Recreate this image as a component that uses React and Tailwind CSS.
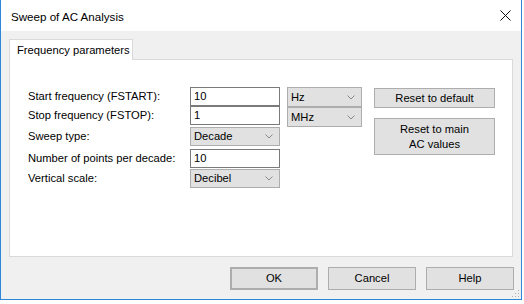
import React from "react";

function Chevron() {
  return (
    <svg width="8" height="5" viewBox="0 0 8 5">
      <path d="M0.5 0.5 L4 4 L7.5 0.5" fill="none" stroke="#8a8a8a" strokeWidth="1" />
    </svg>
  );
}

function Select({ label, className }) {
  return (
    <div
      className={
        "flex items-center justify-between bg-[#e1e1e1] border border-[#adadad] pl-[3px] pr-[6px] " +
        className
      }
    >
      <span>{label}</span>
      <Chevron />
    </div>
  );
}

function Input({ value }) {
  return (
    <div className="flex items-center h-[19px] w-[90px] border border-[#7a7a7a] bg-white pl-[3px]">
      {value}
    </div>
  );
}

function Row({ label, children, className }) {
  return (
    <div className={"flex items-center " + className}>
      <div className="w-[162px] whitespace-nowrap">{label}</div>
      {children}
    </div>
  );
}

function Btn({ children, className }) {
  return (
    <div
      className={
        "flex items-center justify-center text-center bg-[#e1e1e1] border border-[#adadad] leading-[15px] " +
        className
      }
    >
      {children}
    </div>
  );
}

export default function App() {
  return (
    <div className="w-[524px] h-[304px] bg-white text-[11.2px] text-black font-['Liberation_Sans','Noto_Sans',sans-serif] leading-[15px] whitespace-nowrap">
      <div className="relative w-[522px] h-[300px] flex flex-col border-l border-r border-b border-[#2d86d8]">
        {/* title bar */}
        <div className="h-[31px] bg-white flex items-center justify-between pl-[10px] pr-[10px]">
          <span className="text-[11.6px] pt-[1px]">Sweep of AC Analysis</span>
          <svg width="11" height="11" viewBox="0 0 11 11">
            <path d="M0.5 0.5 L10.5 10.5 M10.5 0.5 L0.5 10.5" stroke="#111" strokeWidth="1" fill="none" />
          </svg>
        </div>
        {/* body */}
        <div className="flex-1 bg-[#f0f0f0] pl-[8px] pt-[8px] flex flex-col">
          <div className="relative z-10 w-[124px] h-[21px] -mb-[1px] bg-white border-t border-l border-r border-[#d9d9d9] pl-[7px] flex items-center">
            Frequency parameters
          </div>
          <div className="w-[504px] h-[198px] bg-white border border-[#d9d9d9]">
            <div className="flex pt-[27px] pl-[18px]">
              <div className="flex flex-col w-[252px]">
                <Row label="Start frequency (FSTART):" className="h-[19px]">
                  <Input value="10" />
                </Row>
                <Row label="Stop frequency (FSTOP):" className="h-[19px]">
                  <Input value="1" />
                </Row>
                <Row label="Sweep type:" className="h-[19px] mt-[2px]">
                  <Select label="Decade" className="w-[90px] h-[19px]" />
                </Row>
                <Row label="Number of points per decade:" className="h-[19px] mt-[3px]">
                  <Input value="10" />
                </Row>
                <Row label="Vertical scale:" className="h-[19px] mt-[1px]">
                  <Select label="Decibel" className="w-[90px] h-[19px]" />
                </Row>
              </div>
              <div className="ml-[7px] flex flex-col w-[75px]">
                <Select label="Hz" className="h-[20px]" />
                <Select label="MHz" className="h-[20px]" />
              </div>
              <div className="ml-[12px] mt-[1px] flex flex-col w-[121px] gap-[10px]">
                <Btn className="h-[20px]">Reset to default</Btn>
                <Btn className="h-[37px]">
                  Reset to main
                  <br />
                  AC values
                </Btn>
              </div>
            </div>
          </div>
          <div className="flex justify-end gap-[10px] mt-[10px] pr-[7px]">
            <Btn className="w-[88px] h-[23px] border-2 border-[#0078d7]">OK</Btn>
            <Btn className="w-[88px] h-[23px]">Cancel</Btn>
            <Btn className="w-[88px] h-[23px]">Help</Btn>
          </div>
        </div>
        <svg width="8" height="8" viewBox="0 0 8 8" className="absolute right-[1px] bottom-[1px]">
          <rect x="6" y="0" width="1" height="1" fill="#b0b0b0" />
          <rect x="3" y="3" width="1" height="1" fill="#b0b0b0" />
          <rect x="6" y="3" width="1" height="1" fill="#b0b0b0" />
          <rect x="0" y="6" width="1" height="1" fill="#b0b0b0" />
          <rect x="3" y="6" width="1" height="1" fill="#b0b0b0" />
          <rect x="6" y="6" width="1" height="1" fill="#b0b0b0" />
        </svg>
      </div>
    </div>
  );
}
